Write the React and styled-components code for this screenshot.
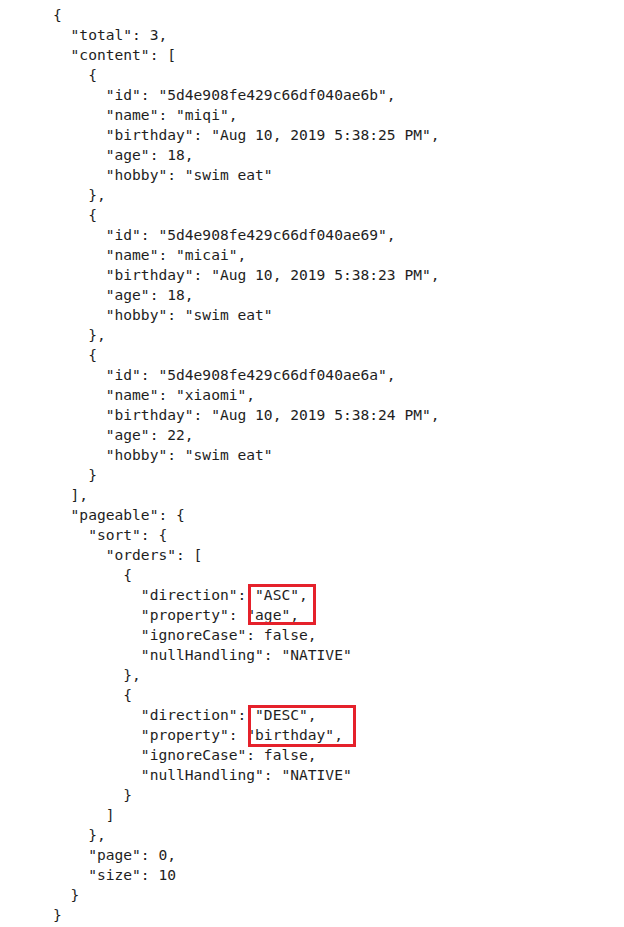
import React from 'react'
import styled, { createGlobalStyle } from 'styled-components'

const GlobalStyle = createGlobalStyle`
    body {
        margin: 0;
        background: #ffffff;
    }
`
const Page = styled.div`
    width: 624px;
    height: 927px;
    background: #ffffff;
    padding: 5px 0 0 53px;
    box-sizing: border-box;
`
const Code = styled.div`
    position: relative;
    font-family: "DejaVu Sans Mono", "Liberation Mono", monospace;
    font-size: 14.6px;
    line-height: 20px;
    color: #1e1e1e;
`
const Line = styled.div`
    white-space: pre;
    height: 20px;
`
// red annotation boxes drawn over the json
const Mark = styled.div`
    position: absolute;
    border: 3px solid #e5212b;
    box-sizing: border-box;
    pointer-events: none;
`

const json = {
    total: 3,
    content: [
        { id: '5d4e908fe429c66df040ae6b', name: 'miqi', birthday: 'Aug 10, 2019 5:38:25 PM', age: 18, hobby: 'swim eat' },
        { id: '5d4e908fe429c66df040ae69', name: 'micai', birthday: 'Aug 10, 2019 5:38:23 PM', age: 18, hobby: 'swim eat' },
        { id: '5d4e908fe429c66df040ae6a', name: 'xiaomi', birthday: 'Aug 10, 2019 5:38:24 PM', age: 22, hobby: 'swim eat' },
    ],
    pageable: {
        sort: {
            orders: [
                { direction: 'ASC', property: 'age', ignoreCase: false, nullHandling: 'NATIVE' },
                { direction: 'DESC', property: 'birthday', ignoreCase: false, nullHandling: 'NATIVE' },
            ],
        },
        page: 0,
        size: 10,
    },
}

const lines = JSON.stringify(json, null, 2).split('\n')

const App = () => {
  return (
    <Page>
        <GlobalStyle />
        <Code>
            {lines.map((l, i) => (
                <Line key={i}>{l}</Line>
            ))}
            <Mark style={{ left: 195, top: 579, width: 68, height: 41 }} />
            <Mark style={{ left: 195, top: 700, width: 108, height: 42 }} />
        </Code>
    </Page>
  )
}

export default App
